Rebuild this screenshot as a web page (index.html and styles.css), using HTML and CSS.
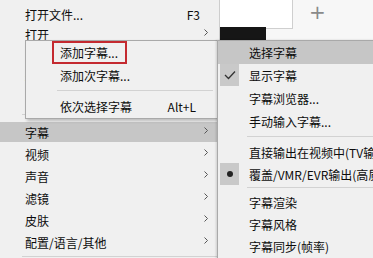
FILE: index.html
```html
<!DOCTYPE html>
<html>
<head>
<meta charset="utf-8">
<link rel="stylesheet" href="styles.css">
</head>
<body>
<div class="backdrop">
  <div class="tab"></div>
  <div class="newtab">+</div>
  <div class="bar"></div>
</div>

<div class="menu main">
  <div class="item first"><span>打开文件...</span><span class="key">F3</span></div>
  <div class="item"><span>打开</span><span class="arrow"></span></div>
  <div class="item"><span>最近播放</span><span class="arrow"></span></div>
  <div class="item"><span>播放</span><span class="arrow"></span></div>
  <div class="item"><span>书签</span><span class="arrow"></span></div>
  <div class="sep tall"></div>
  <div class="item hl"><span>字幕</span><span class="arrow"></span></div>
  <div class="item"><span>视频</span><span class="arrow"></span></div>
  <div class="item"><span>声音</span><span class="arrow"></span></div>
  <div class="item"><span>滤镜</span><span class="arrow"></span></div>
  <div class="item"><span>皮肤</span><span class="arrow"></span></div>
  <div class="item"><span>配置/语言/其他</span><span class="arrow"></span></div>
  <div class="sep"></div>
</div>

<div class="menu sub1">
  <div class="item"><span>添加字幕...</span></div>
  <div class="item"><span>添加次字幕...</span></div>
  <div class="sep"></div>
  <div class="item"><span>依次选择字幕</span><span class="key">Alt+L</span></div>
  <div class="redbox"></div>
</div>

<div class="menu sub2">
  <div class="item hl"><span>选择字幕</span></div>
  <div class="item"><span class="mark"><svg width="12" height="10" viewBox="0 0 12 10"><polyline points="1,5 4.5,8.5 11,1.5" fill="none" stroke="#333" stroke-width="1.3"/></svg></span><span>显示字幕</span></div>
  <div class="item"><span>字幕浏览器...</span></div>
  <div class="item"><span>手动输入字幕...</span></div>
  <div class="sep"></div>
  <div class="item short"><span>直接输出在视频中(TV输出)</span></div>
  <div class="item short"><span class="mark"><svg width="8" height="8" viewBox="0 0 8 8"><circle cx="4" cy="4" r="3" fill="#222"/></svg></span><span>覆盖/VMR/EVR输出(高质量)</span></div>
  <div class="sep narrow"></div>
  <div class="item short"><span>字幕渲染</span></div>
  <div class="item short"><span>字幕风格</span></div>
  <div class="item short"><span>字幕同步(帧率)</span></div>
</div>
</body>
</html>
```

FILE: styles.css
```css
html, body {
  margin: 0;
  padding: 0;
}
body {
  width: 373px;
  height: 258px;
  overflow: hidden;
  position: relative;
  background: #f7f7f7;
  font-family: "Noto Sans CJK SC", "Noto Sans", sans-serif;
  font-size: 12px;
  color: #0c0c0c;
}

.backdrop {
  position: absolute;
  left: 219px;
  top: 0;
  right: 0;
  height: 40px;
  display: flex;
  align-items: flex-start;
}
.tab {
  width: 73px;
  height: 28px;
  background: #fff;
  border-right: 1px solid #cfcfcf;
  border-bottom: 1px solid #cfcfcf;
}
.newtab {
  margin-left: 16px;
  margin-top: 2px;
  font-size: 20px;
  line-height: 20px;
  color: #8a8a8a;
  font-family: "DejaVu Sans", sans-serif;
}
.bar {
  position: absolute;
  left: 1px;
  top: 27px;
  width: 46px;
  height: 13px;
  background: #161616;
}

.menu {
  position: absolute;
  background: #f0f0f0;
  border: 1px solid #a9a9a9;
  box-sizing: border-box;
}
.item {
  height: 22px;
  display: flex;
  align-items: center;
  position: relative;
  white-space: nowrap;
}
.key {
  margin-left: auto;
}
.arrow {
  margin-left: auto;
  width: 4px;
  height: 7px;
  margin-top: -3px;
  background: no-repeat center / 4px 7px url("data:image/svg+xml;utf8,<svg xmlns='http://www.w3.org/2000/svg' width='4' height='7' viewBox='0 0 4 7'><polyline points='0.5,0.5 3.5,3.5 0.5,6.5' fill='none' stroke='%23555' stroke-width='1'/></svg>");
}
.sep {
  height: 7px;
  position: relative;
}
.sep::after {
  content: "";
  position: absolute;
  top: 3px;
  height: 1px;
  background: #d2d2d2;
}

.main {
  left: -1px;
  top: -1px;
  width: 221px;
  height: 270px;
  padding-top: 5px;
  border-color: #cdcdcd;
}
.main .item {
  padding-left: 25px;
  padding-right: 11px;
}
.main .item.first {
  height: 18px;
}
.main .item .key {
  margin-right: 8px;
}
.main .sep.tall {
  height: 10px;
}
.main .sep::after {
  left: 22px;
  right: 2px;
}
.main .hl {
  background: linear-gradient(#c6c6c6, #c6c6c6) 0 1px / 100% 20px no-repeat;
}

.sub1 {
  left: 25px;
  top: 40px;
  width: 193px;
  height: 79px;
  box-shadow: 2px 2px 3px rgba(0, 0, 0, 0.22);
}
.sub1 .item {
  height: 23px;
  padding-left: 34px;
  padding-right: 21px;
}
.sub1 .sep {
  height: 8px;
}
.sub1 .sep::after {
  left: 31px;
  right: 4px;
}
.redbox {
  position: absolute;
  left: 26px;
  top: 0;
  width: 75px;
  height: 23px;
  border: 2px solid #c42a30;
  box-sizing: border-box;
}

.sub2 {
  left: 217px;
  top: 40px;
  width: 170px;
  height: 230px;
  box-shadow: -1px 0 2px rgba(0, 0, 0, 0.15);
}
.sub2 .item {
  height: 23px;
  padding-left: 31px;
}
.sub2 .item.short {
  height: 22px;
}
.sub2 .hl {
  background: #c6c6c6;
}
.sub2 .sep {
  height: 8px;
}
.sub2 .sep.narrow {
  height: 6px;
}
.sub2 .sep::after {
  left: 29px;
  right: 0;
}
.sub2 .sep.narrow::after {
  top: 2px;
}
.mark {
  position: absolute;
  left: 2px;
  top: 0;
  width: 19px;
  height: 22px;
  background: #c9c9c9;
  display: flex;
  align-items: center;
  justify-content: center;
}
```
